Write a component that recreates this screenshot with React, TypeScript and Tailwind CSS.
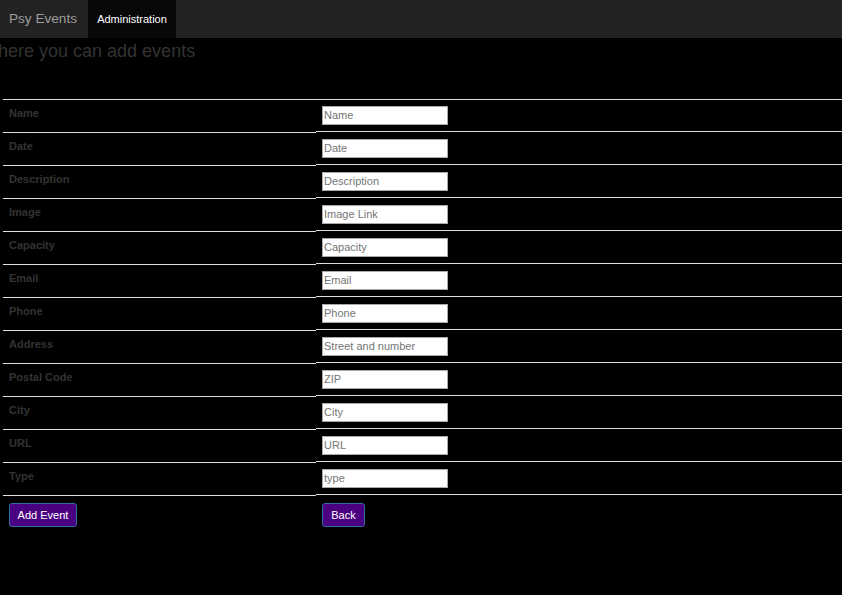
import React from "react";

const fields = [
  { label: "Name", placeholder: "Name" },
  { label: "Date", placeholder: "Date" },
  { label: "Description", placeholder: "Description" },
  { label: "Image", placeholder: "Image Link" },
  { label: "Capacity", placeholder: "Capacity" },
  { label: "Email", placeholder: "Email" },
  { label: "Phone", placeholder: "Phone" },
  { label: "Address", placeholder: "Street and number" },
  { label: "Postal Code", placeholder: "ZIP" },
  { label: "City", placeholder: "City" },
  { label: "URL", placeholder: "URL" },
  { label: "Type", placeholder: "type" },
];

export default function App() {
  return (
    <div className="w-[842px] h-[595px] bg-black overflow-hidden font-['Liberation_Sans',Arial,sans-serif]">
      {/* NAVBAR */}
      <nav className="h-[38px] bg-[#222222] flex items-stretch">
        <span className="pl-[9px] pr-[11px] flex items-center text-[13.6px] text-[#9d9d9d]">Psy Events</span>
        <span className="w-[88px] bg-[#080808] flex items-center justify-center text-[11px] text-white">
          Administration
        </span>
      </nav>

      {/* HEADING */}
      <h1 className="mt-[3px] ml-[-2px] h-[20px] leading-[20px] text-[18px] text-[#333333]">
        here you can add events
      </h1>

      {/* FORM TABLE */}
      <div className="mt-[38px] ml-[3px] border-t border-[#dddddd] grid grid-cols-[313px_1fr] items-start">
        {fields.map((f) => (
          <React.Fragment key={f.label}>
            <div className="h-[33px] border-b border-[#dddddd] pl-[6px] pt-[6px] text-[11px] leading-[15px] font-bold text-[#333333]">
              {f.label}
            </div>
            <div className="h-[32px] border-b border-[#dddddd] pl-[6px] pt-[6px]">
              <input
                placeholder={f.placeholder}
                className="block w-[126px] h-[19px] bg-white border border-[#a9a9a9] px-px pb-px text-[11px] leading-[14px] text-black placeholder:text-[#757575] outline-none"
              />
            </div>
          </React.Fragment>
        ))}
        <div className="pl-[6px] pt-[6px]">
          <button className="h-[24px] w-[68px] bg-[#4b0082] border border-[#2e6da4] rounded-[3px] text-white text-[11px]">
            Add Event
          </button>
        </div>
        <div className="pl-[6px] pt-[6px]">
          <button className="h-[24px] w-[43px] bg-[#4b0082] border border-[#2e6da4] rounded-[3px] text-white text-[11px]">
            Back
          </button>
        </div>
      </div>
    </div>
  );
}
